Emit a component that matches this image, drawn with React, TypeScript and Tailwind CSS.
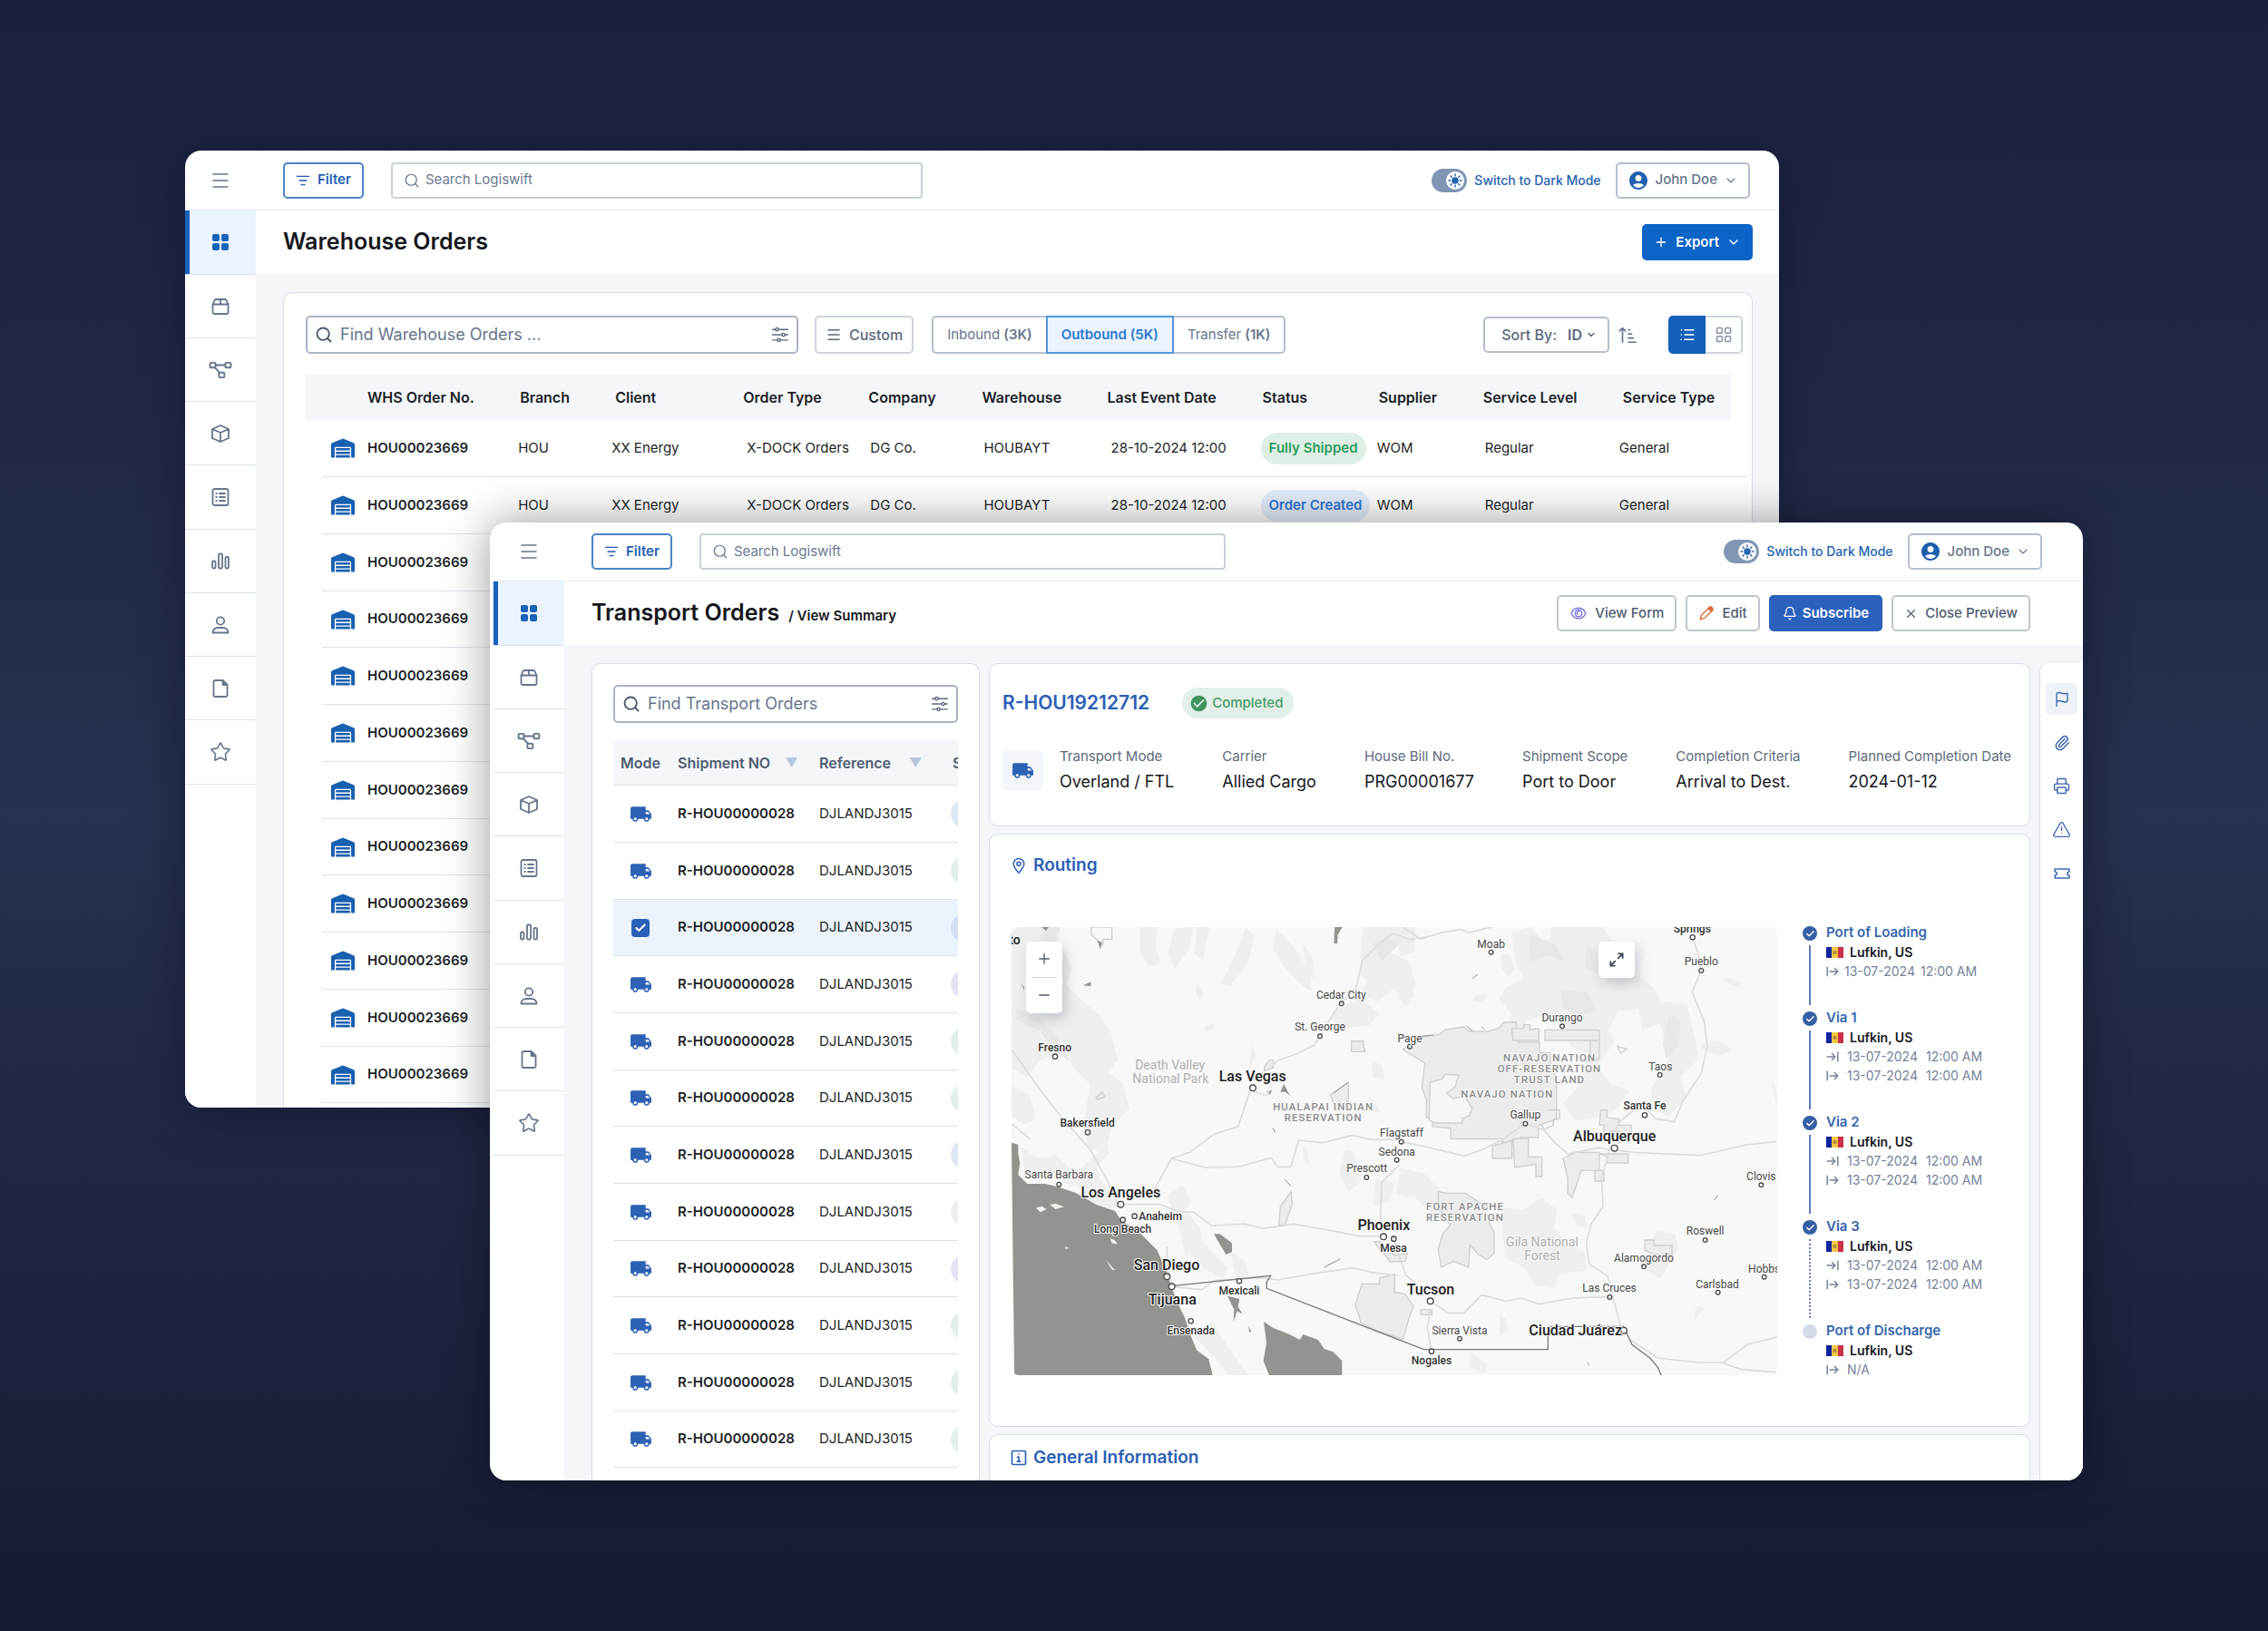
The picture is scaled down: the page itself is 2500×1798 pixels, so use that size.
import type { ReactNode, SVGProps } from "react";
import clsx from "clsx";
import { FaWarehouse } from "react-icons/fa";
import {
  MdAccountCircle,
  MdCheckCircle,
  MdLocalShipping,
} from "react-icons/md";
import {
  Bell,
  Check,
  ChevronDown,
  Flag,
  ListFilter,
  Menu,
  Minus,
  Paperclip,
  Plus,
  Printer,
  Search,
  Star,
  TriangleAlert,
  X,
} from "lucide-react";

type IconProps = SVGProps<SVGSVGElement> & { size?: number };

const Icon = ({ size = 24, children, ...props }: IconProps) => (
  <svg
    width={size}
    height={size}
    viewBox="0 0 24 24"
    fill="none"
    stroke="currentColor"
    strokeWidth={1.8}
    strokeLinecap="round"
    strokeLinejoin="round"
    aria-hidden="true"
    {...props}
  >
    {children}
  </svg>
);

const DashboardIcon = () => (
  <Icon fill="currentColor" stroke="none">
    <rect x="3" y="3" width="8" height="8" rx="2" />
    <rect x="13" y="3" width="8" height="8" rx="2" />
    <rect x="3" y="13" width="8" height="8" rx="2" />
    <rect x="13" y="13" width="8" height="8" rx="2" />
  </Icon>
);

const ParcelIcon = () => (
  <Icon>
    <path d="M3.5 9.5 5.6 4.8A1.5 1.5 0 0 1 7 4h10a1.5 1.5 0 0 1 1.4.8l2.1 4.7V18a2 2 0 0 1-2 2h-13a2 2 0 0 1-2-2zM3.5 9.5h17M12 4v5.5" />
  </Icon>
);

const FlowIcon = () => (
  <Icon size={26}>
    <rect x="1.500" y="4.500" width="5.500" height="5" rx="1" />
    <rect x="17" y="4.500" width="5.500" height="5" rx="1" />
    <rect x="10.500" y="14.500" width="5.500" height="5" rx="1" />
    <path d="M7 7h10M6.500 9.500l4.500 5" />
  </Icon>
);

const BoxIcon = () => (
  <Icon>
    <path d="M12 3 21 7v10l-9 4-9-4V7zM3 7l9 4 9-4M12 11v10" />
  </Icon>
);

const ListBoxIcon = () => (
  <Icon>
    <rect x="3.500" y="3" width="17" height="18" rx="2" />
    <path d="M7.300 8h.6M7.300 12h.6M7.300 16h.6M11 8h6M11 12h6M11 16h6" />
  </Icon>
);

const BarsIcon = () => (
  <Icon>
    <rect x="3" y="11.500" width="3.500" height="8" rx="1.200" />
    <rect x="10" y="3.500" width="4" height="16" rx="1.200" />
    <rect x="17.500" y="7" width="3.500" height="12.500" rx="1.200" />
  </Icon>
);

const UserIcon = () => (
  <Icon>
    <circle cx="12" cy="7.500" r="4.200" />
    <path d="M3.500 20.500c0-3.500 2.600-5.500 6-5.500h5c3.400 0 6 2 6 5.500z" />
  </Icon>
);

const FileIcon = () => (
  <Icon>
    <path d="M6 3h8.500L19.500 8v11.500a1.500 1.500 0 0 1-1.500 1.500H6a1.500 1.500 0 0 1-1.500-1.500v-15A1.500 1.500 0 0 1 6 3z" />
    <path d="M14.500 3v5h5z" fill="currentColor" />
  </Icon>
);

const SlidersIcon = () => (
  <Icon size={20} strokeWidth={1.7}>
    <path d="M2 5h3.500M10 5h12M2 12h12M18.500 12H22M2 19h6M12.500 19H22" />
    <circle cx="7.700" cy="5" r="2" />
    <circle cx="16.300" cy="12" r="2" />
    <circle cx="10.300" cy="19" r="2" />
  </Icon>
);

const SortIcon = () => (
  <Icon size={22}>
    <path d="M6 21V4M2.500 7.500 6 4l3.500 3.500M13 6h2M13 11h4M13 16h6M13 21h9" />
  </Icon>
);

const GridIcon = () => (
  <Icon size={20}>
    <rect x="3" y="3" width="7" height="7" rx="1.500" />
    <rect x="14" y="3" width="7" height="7" rx="1.500" />
    <rect x="3" y="14" width="7" height="7" rx="1.500" />
    <rect x="14" y="14" width="7" height="7" rx="1.500" />
  </Icon>
);

const RowsIcon = () => (
  <Icon size={18} strokeWidth={2.2}>
    <path d="M3 5h.1M3 12h.1M3 19h.1M8 5h13M8 12h13M8 19h13" />
  </Icon>
);

const SunIcon = () => (
  <Icon size={16} strokeWidth={2.2}>
    <circle cx="12" cy="12" r="4.500" fill="currentColor" />
    <path d="M12 1.500v2.500M12 20v2.500M1.500 12H4M20 12h2.500M4.600 4.600l1.700 1.700M17.700 17.700l1.700 1.700M4.600 19.400l1.700-1.700M17.700 6.300l1.700-1.700" />
  </Icon>
);

const EyeIcon = () => (
  <Icon size={20} strokeWidth={1.7} className="text-[#7a78dd]">
    <path d="M2.500 12C4.500 7 8 5 12 5s7.500 2 9.500 7c-2 5-5.500 7-9.500 7s-7.500-2-9.500-7z" />
    <circle cx="12" cy="12" r="4.500" />
    <path d="M13 9.800a2.300 2.300 0 0 0-2.500 3.700" />
  </Icon>
);

const PencilIcon = () => (
  <Icon size={18} className="text-[#df6a35]">
    <path d="M3 21l1.500-6L16 3.500a2.500 2.500 0 0 1 3.500 0l1 1a2.500 2.500 0 0 1 0 3.500L9 19.500z" />
    <path d="M14.500 5 16.500 3h3l1.500 2v2.500L19 9.500z" fill="currentColor" />
  </Icon>
);

const PinIcon = () => (
  <Icon size={20}>
    <path d="M12 22c-4.500-5-7-8.700-7-12a7 7 0 0 1 14 0c0 3.300-2.500 7-7 12z" />
    <circle cx="12" cy="10" r="2.500" />
  </Icon>
);

const InfoBoxIcon = () => (
  <Icon size={20} strokeWidth={2}>
    <rect x="3" y="3" width="18" height="18" rx="1.500" />
    <path d="M12 7v.2M10.500 11H12v6M10 17h4" />
  </Icon>
);

const TicketIcon = () => (
  <Icon size={20}>
    <path d="M2.500 6h19v3.500a2.500 2.500 0 0 0 0 5V18h-19v-3.500a2.500 2.500 0 0 0 0-5z" />
  </Icon>
);

const ExpandIcon = () => (
  <Icon size={20} strokeWidth={2.2}>
    <path d="M14 10l6-6M14.500 4H20v5.500M10 14l-6 6M4 14.500V20h5.500" />
  </Icon>
);

const DepartIcon = () => (
  <Icon size={14} strokeWidth={2.6}>
    <path d="M2 4v16M7 12h15M16 6l6 6-6 6" />
  </Icon>
);

const ArriveIcon = () => (
  <Icon size={14} strokeWidth={2.6}>
    <path d="M22 4v16M2 12h15M11 6l6 6-6 6" />
  </Icon>
);

const FlagMark = () => (
  <svg width="19" height="12" viewBox="0 0 19 12" aria-hidden="true">
    <rect width="7" height="12" fill="#12239e" />
    <rect x="6" width="7" height="12" fill="#f4c944" />
    <rect x="13" width="6" height="12" fill="#c9304a" />
    <circle cx="9.500" cy="6" r="2.300" fill="#b98a3a" />
  </svg>
);

const navItems = [
  { label: "Dashboard", icon: <DashboardIcon /> },
  { label: "Parcels", icon: <ParcelIcon /> },
  { label: "Workflows", icon: <FlowIcon /> },
  { label: "Inventory", icon: <BoxIcon /> },
  { label: "Tasks", icon: <ListBoxIcon /> },
  { label: "Reports", icon: <BarsIcon /> },
  { label: "Users", icon: <UserIcon /> },
  { label: "Documents", icon: <FileIcon /> },
  { label: "Favourites", icon: <Star size={24} strokeWidth={1.6} /> },
];

const Sidebar = () => (
  <nav className="w-[78px] flex-none bg-white" aria-label="Main">
    {navItems.map((item, index) => (
      <a
        key={item.label}
        href="#"
        aria-label={item.label}
        className={clsx(
          "flex h-[70px] items-center justify-center border-b border-[#dbe2ec] nth-[4n+1]:h-[71px]",
          index === 0
            ? "bg-[#ebf4fe] text-[#1a62b9] shadow-[inset_5px_0_0_#1a62bd]"
            : "text-[#66758c]",
        )}
      >
        {item.icon}
      </a>
    ))}
  </nav>
);

const Header = ({ id, className }: { id: string; className: string }) => (
  <header
    className={clsx(
      "flex flex-none items-center border-b border-[#e6eaf0]",
      className,
    )}
  >
    <button
      className="flex w-[78px] flex-none justify-center text-[#66758c]"
      aria-label="Toggle menu"
    >
      <Menu size={24} strokeWidth={1.5} />
    </button>
    <button className="ml-[30px] flex h-10 items-center gap-2 rounded-[5px] border-2 border-[#4a83c8] px-3 text-[15px] font-semibold text-[#1f61b4]">
      <ListFilter size={16} />
      Filter
    </button>
    <label className="ml-[30px] flex h-10 w-[34%] items-center gap-[6px] rounded-[4px] border-2 border-[#c9d0da] px-3 text-[#66758c]">
      <Search size={18} strokeWidth={1.6} />
      <input
        type="search"
        aria-label="Search Logiswift"
        placeholder="Search Logiswift"
        className="min-w-0 flex-1 text-[15px] outline-none placeholder:text-[#6b7a90]"
      />
    </label>
    <label
      htmlFor={id}
      className="ml-auto flex items-center gap-2 text-sm font-medium text-[#2563b0]"
    >
      <input id={id} type="checkbox" role="switch" className="sr-only" />
      <span className="flex h-[26px] w-[39px] items-center justify-end rounded-full bg-[#8296b4] pr-[3px]">
        <span className="flex size-5 items-center justify-center rounded-full bg-white">
          <SunIcon />
        </span>
      </span>
      Switch to Dark Mode
    </label>
    <button className="ml-4 flex h-10 items-center gap-[7px] rounded-[5px] border-2 border-[#b5bfcd] px-[11px] text-[15px] font-medium text-[#66758c]">
      <MdAccountCircle size={24} className="text-[#1f5fae]" />
      John Doe
      <ChevronDown size={16} strokeWidth={1.7} />
    </button>
  </header>
);

type WindowProps = {
  id: string;
  className: string;
  headerClassName: string;
  title: ReactNode;
  actions: ReactNode;
  actionsClassName: string;
  children: ReactNode;
};

const AppWindow = ({
  id,
  className,
  headerClassName,
  title,
  actions,
  actionsClassName,
  children,
}: WindowProps) => (
  <section
    className={clsx(
      "flex min-w-0 flex-col overflow-hidden rounded-[18px] bg-white",
      className,
    )}
  >
    <Header id={id} className={headerClassName} />
    <div className="flex min-h-0 flex-1">
      <Sidebar />
      <div className="flex min-w-0 flex-1 flex-col bg-[#f4f6fa]">
        <div
          className={clsx(
            "flex h-[70px] flex-none items-center justify-between bg-white pl-[30px]",
            actionsClassName,
          )}
        >
          {title}
          <div className="flex gap-[10px]">{actions}</div>
        </div>
        {children}
      </div>
    </div>
  </section>
);

const FindBox = ({
  placeholder,
  className,
}: {
  placeholder: string;
  className: string;
}) => (
  <div
    className={clsx(
      "flex h-[42px] items-center gap-2 rounded-[5px] border-2 border-[#aab5c3] px-2",
      className,
    )}
  >
    <Search size={20} strokeWidth={2.2} className="flex-none text-[#4b586b]" />
    <input
      type="search"
      aria-label={placeholder}
      placeholder={placeholder}
      className="min-w-0 flex-1 text-lg outline-none placeholder:text-[#66758c]"
    />
    <button aria-label="Search options" className="flex-none text-[#5d6b80]">
      <SlidersIcon />
    </button>
  </div>
);

const orderColumns = [
  { label: "WHS Order No.", width: 166, head: "", cell: "font-semibold" },
  { label: "Branch", width: 103, head: "pl-0.5", cell: "" },
  { label: "Client", width: 145, head: "pl-1", cell: "" },
  { label: "Order Type", width: 138, head: "", cell: "pl-1" },
  { label: "Company", width: 125, head: "", cell: "pl-0.5" },
  { label: "Warehouse", width: 138, head: "", cell: "pl-0.5" },
  { label: "Last Event Date", width: 169, head: "", cell: "pl-1" },
  { label: "Status", width: 128, head: "pl-0.5", cell: "" },
  { label: "Supplier", width: 117, head: "pl-0.5", cell: "" },
  { label: "Service Level", width: 150, head: "", cell: "pl-0.5" },
  { label: "Service Type", width: 123, head: "pl-1", cell: "" },
];

const order = [
  "HOU00023669",
  "HOU",
  "XX Energy",
  "X-DOCK Orders",
  "DG Co.",
  "HOUBAYT",
  "28-10-2024 12:00",
  "Fully Shipped",
  "WOM",
  "Regular",
  "General",
];

// only the first two rows have their details loaded
const orders = [
  order,
  order.map((value) => (value === "Fully Shipped" ? "Order Created" : value)),
  ...Array.from({ length: 10 }, () => order.slice(0, 1)),
];

const StatusPill = ({ status }: { status: string }) => (
  <span
    className={clsx(
      "inline-flex h-[35px] items-center rounded-full px-[9px] font-semibold whitespace-nowrap",
      status === "Fully Shipped"
        ? "bg-[#deefe6] text-[#2f9a63]"
        : "bg-[#e3eefb] text-[#2f74d0]",
    )}
  >
    {status}
  </span>
);

const OrdersTable = () => (
  <table className="mt-[23px] w-full table-fixed border-separate border-spacing-0 text-left text-[15px] whitespace-nowrap text-[#1c1f26]">
    <colgroup>
      <col style={{ width: 18 }} />
      <col style={{ width: 50 }} />
      {orderColumns.map((column) => (
        <col key={column.label} style={{ width: column.width }} />
      ))}
      <col style={{ width: 17 }} />
    </colgroup>
    <thead>
      <tr className="h-[50px]">
        <td className="bg-[#f4f6fa]" />
        <td className="bg-[#f4f6fa]" />
        {orderColumns.map((column) => (
          <th
            key={column.label}
            scope="col"
            className={clsx(
              "bg-[#f4f6fa] text-base font-semibold",
              column.head,
            )}
          >
            {column.label}
          </th>
        ))}
        <td />
      </tr>
    </thead>
    <tbody>
      {orders.map((values, row) => (
        <tr key={row} className="h-[63px] nth-[4n]:h-[62px]">
          <td />
          <td className="border-b border-[#dde3eb] pl-[10px]">
            <FaWarehouse size={26} className="text-[#1a60b0]" />
          </td>
          {orderColumns.map((column, index) => (
            <td
              key={column.label}
              className={clsx("border-b border-[#dde3eb]", column.cell)}
            >
              {column.label === "Status" && values[index] ? (
                <StatusPill status={values[index]} />
              ) : (
                values[index]
              )}
            </td>
          ))}
          <td className="border-b border-[#dde3eb]" />
        </tr>
      ))}
    </tbody>
  </table>
);

const tabs = [
  { label: "Inbound", count: "(3K)" },
  { label: "Outbound", count: "(5K)" },
  { label: "Transfer", count: "(1K)" },
];

const WarehouseWindow = () => (
  <AppWindow
    id="dark-mode-warehouse"
    className="col-start-2 col-end-4 row-start-2 row-end-4 shadow-[0_10px_50px_rgba(5,8,25,0.4)]"
    headerClassName="h-[66px] pr-8"
    title={
      <h1 className="text-[25px] font-semibold text-[#15171c]">
        Warehouse Orders
      </h1>
    }
    actionsClassName="pr-[29px]"
    actions={
      <button className="flex h-10 items-center gap-2 rounded-[5px] bg-[#0c64c6] px-[13px] text-[15px] font-semibold text-white">
        <Plus size={16} />
        Export
        <ChevronDown size={16} />
      </button>
    }
  >
    <div className="flex min-h-0 flex-1 pt-5 pr-[29px] pl-[30px]">
      <div className="min-w-0 flex-1 rounded-t-[10px] border border-b-0 border-[#d5dce8] bg-white pt-[25px] pr-[6px] pl-6">
        <div className="mr-1 flex h-[42px] items-center">
          <FindBox
            placeholder="Find Warehouse Orders ..."
            className="w-[543px]"
          />
          <button className="ml-[18px] flex h-full items-center gap-2 rounded-[5px] border-2 border-[#cdd4de] px-[10px] text-base font-medium text-[#5b687b]">
            <Menu size={18} strokeWidth={2} />
            Custom
          </button>
          <div className="ml-5 flex h-full text-[15px] text-[#66758c]">
            {tabs.map((tab, index) => (
              <button
                key={tab.label}
                className={clsx(
                  "border-2 px-[15px]",
                  index === 0 && "rounded-l-[5px] border-r-0 border-[#b5bfcd]",
                  index === 1 &&
                    "border-[#5396dc] bg-[#ebf4fe] font-semibold text-[#2b76cf]",
                  index === 2 && "rounded-r-[5px] border-l-0 border-[#b5bfcd]",
                )}
              >
                {tab.label} <span className="font-semibold">{tab.count}</span>
              </button>
            ))}
          </div>
          <div className="ml-auto flex h-10 items-center rounded-[5px] border-2 border-[#b5bfcd] pr-3 pl-[18px] text-base font-medium text-[#5b687b]">
            <label htmlFor="sort-by">Sort By:</label>
            <select
              id="sort-by"
              className="ml-3 appearance-none font-semibold outline-none"
            >
              <option>ID</option>
            </select>
            <ChevronDown size={12} strokeWidth={3} className="ml-1" />
          </div>
          <button
            aria-label="Sort ascending"
            className="ml-[9px] flex-none text-[#66758c]"
          >
            <SortIcon />
          </button>
          <div className="ml-[34px] flex h-full">
            <button
              aria-label="List view"
              className="flex w-[41px] items-center justify-center rounded-l-[5px] bg-[#1560ba] text-white"
            >
              <RowsIcon />
            </button>
            <button
              aria-label="Grid view"
              className="flex w-[41px] items-center justify-center rounded-r-[5px] border-2 border-l-0 border-[#cdd4de] text-[#8592a5]"
            >
              <GridIcon />
            </button>
          </div>
        </div>
        <OrdersTable />
      </div>
    </div>
  </AppWindow>
);

const shipments = [
  "bg-[#e0e8f6]",
  "bg-[#e2f0e9]",
  "bg-[#d3e0f4]",
  "bg-[#e5e4f3]",
  "bg-[#e2f0e9]",
  "bg-[#e2f0e9]",
  "bg-[#e0e8f6]",
  "bg-[#eeeff2]",
  "bg-[#e5e4f3]",
  "bg-[#e2f0e9]",
  "bg-[#e2f0e9]",
  "bg-[#e2f0e9]",
];

const ShipmentsTable = () => (
  <div className="mt-[19px] overflow-hidden rounded-t-[5px]">
    <table className="w-full table-fixed border-separate border-spacing-0 text-left text-[15px] whitespace-nowrap text-[#1c1f26]">
      <colgroup>
        <col style={{ width: 71 }} />
        <col style={{ width: 156 }} />
        <col style={{ width: 145 }} />
        <col />
      </colgroup>
      <thead>
        <tr className="h-[50px] text-base text-[#4f5c70] [&>th]:border-b [&>th]:border-[#dde3eb] [&>th]:bg-[#f4f6fa] [&>th]:font-semibold">
          <th scope="col" className="pl-2">
            Mode
          </th>
          <th scope="col">
            <span className="flex items-center gap-4">
              Shipment NO
              <span className="text-sm text-[#b9c6da]">▼</span>
            </span>
          </th>
          <th scope="col">
            <span className="flex items-center gap-5">
              Reference
              <span className="text-sm text-[#b9c6da]">▼</span>
            </span>
          </th>
          <th scope="col" className="pl-0.5">
            Status
          </th>
        </tr>
      </thead>
      <tbody>
        {shipments.map((pill, index) => (
          <tr
            key={index}
            className={clsx(
              "h-[63px] nth-[3n]:h-[62px] [&>td]:border-b [&>td]:border-[#dde3eb]",
              index === 2 && "bg-[#ebf3fd]",
            )}
          >
            <td className="pl-[18px]">
              {index === 2 ? (
                <span className="grid w-6 place-items-center">
                  <input
                    type="checkbox"
                    defaultChecked
                    aria-label="Select R-HOU00000028"
                    className="col-start-1 row-start-1 size-5 appearance-none rounded-[4px] bg-[#2a60b8]"
                  />
                  <Check
                    size={14}
                    strokeWidth={3.5}
                    className="pointer-events-none col-start-1 row-start-1 text-white"
                  />
                </span>
              ) : (
                <MdLocalShipping size={25} className="text-[#2d61b5]" />
              )}
            </td>
            <td className="font-semibold">R-HOU00000028</td>
            <td>DJLANDJ3015</td>
            <td className="overflow-hidden">
              <span className={clsx("block h-8 w-24 rounded-full", pill)} />
            </td>
          </tr>
        ))}
      </tbody>
    </table>
  </div>
);

const details = [
  { label: "Transport Mode", value: "Overland / FTL" },
  { label: "Carrier", value: "Allied Cargo" },
  { label: "House Bill No.", value: "PRG00001677" },
  { label: "Shipment Scope", value: "Port to Door" },
  { label: "Completion Criteria", value: "Arrival to Dest." },
  { label: "Planned Completion Date", value: "2024-01-12" },
];

const SummaryCard = () => (
  <article className="flex-none rounded-[10px] border border-[#d5dce8] bg-white pt-[26px] pb-[36px] pl-[14px]">
    <div className="flex h-[34px] items-center gap-9">
      <h2 className="text-[21px] font-semibold text-[#2b60b5]">
        R-HOU19212712
      </h2>
      <span className="flex h-full items-center gap-1 rounded-full bg-[#e1f0e8] pr-3 pl-2 text-[15px] font-medium text-[#4b9a6c]">
        <MdCheckCircle size={21} className="text-[#3f935f]" />
        Completed
      </span>
    </div>
    <div className="mt-8 flex items-center">
      <span className="flex size-[45px] flex-none items-center justify-center rounded-[6px] bg-[#f3f6fa] text-[#2d61b5]">
        <MdLocalShipping size={25} />
      </span>
      <dl className="ml-[18px] flex gap-[53px] whitespace-nowrap">
        {details.map((detail) => (
          <div key={detail.label} className="flex flex-col gap-[6px]">
            <dt className="text-[15px] leading-5 text-[#5d6a7d]">
              {detail.label}
            </dt>
            <dd className="text-lg leading-6 text-[#15171c]">{detail.value}</dd>
          </div>
        ))}
      </dl>
    </div>
  </article>
);

type Place = {
  name: string;
  x: number;
  y: number;
  dot?: [number, number];
  anchor?: "start" | "end";
};

const cities: Place[] = [
  { name: "Los Angeles", x: 407, y: 930, dot: [407, 952] },
  { name: "San Diego", x: 559, y: 1168, dot: [560, 1191] },
  { name: "Tijuana", x: 578, y: 1282, dot: [576, 1224] },
  { name: "Las Vegas", x: 843, y: 545, dot: [844, 567] },
  { name: "Phoenix", x: 1277, y: 1037, dot: [1276, 1059] },
  { name: "Tucson", x: 1432, y: 1249, dot: [1431, 1272] },
  { name: "Albuquerque", x: 2040, y: 743, dot: [2040, 766] },
  { name: "Ciudad Juárez", x: 1911, y: 1386, dot: [2071, 1369] },
];

const towns: Place[] = [
  { name: "Fresno", x: 189, y: 445, dot: [190, 463] },
  { name: "Bakersfield", x: 297, y: 696, dot: [298, 714] },
  { name: "Anaheim", x: 467, y: 1004, dot: [453, 991], anchor: "start" },
  { name: "Long Beach", x: 414, y: 1047, dot: [414, 1003] },
  { name: "Mexicali", x: 799, y: 1250, dot: [799, 1206] },
  { name: "Ensenada", x: 639, y: 1382, dot: [639, 1338] },
  { name: "Mesa", x: 1309, y: 1110, dot: [1310, 1066] },
  { name: "Nogales", x: 1435, y: 1482, dot: [1435, 1438] },
  { name: "Santa Fe", x: 2140, y: 638, dot: [2140, 657] },
  { name: "Springs", x: 2297, y: 52, dot: [2298, 69] },
];

const villages: Place[] = [
  { name: "Santa Barbara", x: 203, y: 867, dot: [203, 886] },
  { name: "St. George", x: 1066, y: 378, dot: [1066, 396] },
  { name: "Cedar City", x: 1136, y: 273, dot: [1137, 288] },
  { name: "Page", x: 1363, y: 415, dot: [1363, 430] },
  { name: "Flagstaff", x: 1336, y: 727, dot: [1335, 745] },
  { name: "Sedona", x: 1320, y: 790, dot: [1320, 805] },
  { name: "Prescott", x: 1221, y: 845, dot: [1220, 863] },
  { name: "Sierra Vista", x: 1528, y: 1381, dot: [1528, 1396] },
  { name: "Las Cruces", x: 2023, y: 1240, dot: [2024, 1259] },
  { name: "Alamogordo", x: 2137, y: 1143, dot: [2137, 1158] },
  { name: "Carlsbad", x: 2380, y: 1228, dot: [2382, 1243] },
  { name: "Hobbs", x: 2535, y: 1177, dot: [2535, 1192] },
  { name: "Roswell", x: 2340, y: 1051, dot: [2340, 1070] },
  { name: "Clovis", x: 2525, y: 873, dot: [2525, 888] },
  { name: "Taos", x: 2192, y: 509, dot: [2190, 524] },
  { name: "Pueblo", x: 2327, y: 160, dot: [2327, 179] },
  { name: "Durango", x: 1867, y: 348, dot: [1867, 363] },
  { name: "Moab", x: 1632, y: 103, dot: [1632, 118] },
  { name: "Gallup", x: 1745, y: 669, dot: [1745, 685] },
];

const parks: Place[] = [
  { name: "Death Valley", x: 570, y: 506 },
  { name: "National Park", x: 572, y: 552 },
  { name: "Gila National", x: 1801, y: 1091 },
  { name: "Forest", x: 1801, y: 1137 },
];

const reservations: Place[] = [
  { name: "HUALAPAI INDIAN", x: 1077, y: 640 },
  { name: "RESERVATION", x: 1077, y: 676 },
  { name: "NAVAJO NATION", x: 1825, y: 478 },
  { name: "OFF-RESERVATION", x: 1825, y: 514 },
  { name: "TRUST LAND", x: 1825, y: 550 },
  { name: "NAVAJO NATION", x: 1685, y: 598 },
  { name: "FORT APACHE", x: 1546, y: 970 },
  { name: "RESERVATION", x: 1546, y: 1006 },
];

const Places = ({
  places,
  radius = 0,
  className,
}: {
  places: Place[];
  radius?: number;
  className: string;
}) => (
  <g className={className}>
    {places.map(({ name, x, y, dot, anchor = "middle" }) => (
      <g key={`${name}-${x}-${y}`}>
        {dot && (
          <circle
            cx={dot[0]}
            cy={dot[1]}
            r={radius}
            fill="#fff"
            stroke="#4a4a4a"
            strokeWidth={4}
          />
        )}
        <text
          x={x}
          y={y}
          textAnchor={anchor}
          stroke="#f8f8f8"
          strokeWidth={6}
          strokeLinejoin="round"
          paintOrder="stroke"
        >
          {name}
        </text>
      </g>
    ))}
  </g>
);

const RouteMap = () => (
  <svg
    viewBox="46 35 2532 1482"
    className="block w-full rounded-[8px] font-['Roboto',sans-serif]"
    role="img"
    aria-label="Route map"
  >
    <rect x="46" y="35" width="2532" height="1482" fill="#f8f8f8" />
    {/* mountains and forests */}
    <g fill="#efefef">
      <path d="M46 35h150l10 60 40 70-20 60 60 60 50 40 40 60 20 90-30 40 50 40 20 80-60 60-20 90-60-20-10-90 20-120-60-60-40-90-60-40-50-30-40-60-30-20z" />
      <path d="M46 250l60 60 40 90 60 60-60 10-50 60-50-30z" />
      <path d="M46 560l60 30 20 80-40 20-40-30zM75 760l60 40 60-10 50 50 80-20 20 60-100 10-60-30-90 10zM250 860l60-60 50-40 10 20-50 60 40 60 40 60-60 10-60-40z" />
      <path d="M470 35h60l-10 60 20 60-40 10-30-50zM585 40l60-5-10 70-50 70-20-60zM660 35h40l-20 110-30-20zM820 40l30 20-20 90-60 80-30-10 40-80zM920 40l60 60 50 80 10 70-30-20-60-60-40-60zM1010 90l30 40 10 80-30-20zM660 215l20 40-10 25-15-30zM690 360l30-5-10 20-30 5zM840 420l15 40-25 50z" />
      <path d="M1210 35h170v30l-40 10-50 50-60 90-30-20v-80zM1240 180l60-60 60 30 20 60-60 20-60 50-60-20zM1130 300l70-30 60 50-30 40-90 10-40-30zM1290 200l60 0 30 60-30 40z" />
      <path d="M1320 35h60v80l-50 20zM1665 120l30 10 15 40-20 30-25-30zM1335 210l30-15 20 30-30 40-35 10zM1575 260l50-5-20 25-30 0z" />
      <path d="M1700 50l60-15 60 60 10-60h170l40 60 60 40 10 60 60 40 40 80 60 30 10 60-50 10-40-60-60 20-10-70-70 10-30 60 20 40-60 80 50 60 60 20-40 60-50 30-90 10-40-60 60-60 20-100-60-30-20-80-60-20-60 20-10 60-60-20 20-60-40-50 20-40 60-30-30-60z" />
      <path d="M2200 280l80 10 20 90 20 90-60 60 20 70-60 60-50-20-10-70 60-100-20-90zM2330 420l50-10 50 30-40 20-60-20zM2400 200l60 15-10 20-50-20zM2560 540l20 50v60z" />
      <path d="M1330 830l80 20 60 60 20 100-50-20-60-60-60-10zM1250 870l60 10-10 60-60 20zM1150 770l30 10 20 100-40 30-30-60z" />
      <path d="M1660 960l80 10 60-40 50 40-10 60 40 50 60 30 10 60-90 10-20 50-60-10-40-60-60-30-10-80zM1900 980l40 10 10 40-40-10zM2180 1040l60 10 10 50-60 100-40-30 10-90z" />
      <path d="M560 920l50-30 30 50-20 30 50 60 10 80-60 10-20-90zM640 1040l60 60 60 60-10 40-60-30-60-60zM640 1380l70-40 50 80 70 100h-60l-50-60zM770 1110l50 30 10 50-40 10z" />
      <path d="M1240 480l30 10 10 50-40-10zM1660 1320l20 10 10 40-30 20zM2310 1290l30 5-30 30-10 20zM1560 1440l60 40-10 30-50-20zM1230 590l40 60-40-10zM1010 760l15 10 5 50-20-20z" />
    </g>
    <g fill="#e8e8e8">
      <path d="M60 300l80 40 60 60 40 80-60-40-40-60-80-40zM150 35h60l-20 50-50-10zM1760 60l80 30 40 60-60-20-60 20zM1950 100l60 40-10 60-60-30zM1860 240l90 10 30 60-60 20-50-30zM1240 90l50-20 40 20-60 60zM2220 330l40 10-10 90-40 40-10-50z" />
    </g>
    {/* reservations */}
    <g fill="#ececec" stroke="#cfcfcf" strokeWidth={4}>
      <path d="M1340 440l60-40 60-10 20-15 60-10 20 15 60 0 35-10 20-20 40 0 7 66h70v35h36v50l20 30v140l-60 20v40h-60v15h-60v-10h-170V700l-60-5v-30h-20v-60l-15-40 10-80z" />
      <path d="M1430 548l40-10 10-16 45 2-12 40-28 20 20 18 40-8 24 40-8 24-24 10v15h-90l-20-10z" fill="#f6f6f6" />
      <path d="M1700 370h40v-12h20v16l30-4v40h-85zM1810 375h180v35h-180zM1960 410h30v60l-30 10z" />
      <path d="M1636 760l65-20v60h-65zM1705 735h50v60h45v65h-20v-40l-70 10zM1870 800l40-20h80v60h-60l-30 90-15-15v-50zM1990 785h95v30h-70v-20zM1975 840h30v35h-30zM1995 640h20v25l40 5v20h40v30l-40 30v-40h-30v30h-20v-50h-15z" />
      <path d="M1457 910l30 5 60 0 60 40 20 60 15 30v70l-25 20-30-20-25-30-5 75-50-20-40 20-10-60 15-50 25-30-40-60z" />
      <path d="M1205 1215h58v-20l50-12v60l34 5 28 40-16 45-18 65-80-25-60-30-18-60z" />
      <path d="M1245 1075h20v20l50 25 40-5-6 25-50 2z" />
      <path d="M1170 412h40v15l6 20h-46zM883 495l15-20h14v25l-30 10zM930 1020l5-60 35-50 5 40-25 70zM1100 590l60-40v60l-40 30zM325 600l20-20 10 15-20 10zM2140 1070h30v18h60v30h-60l-30-15zM1400 1300h36v17h-36z" />
      <path d="M310 60v-25h68v40h-30v20z" fill="none" />
      <path d="M1820 640h38v30h-20v20l-30 14-14-20M2050 430l30 8-20 14z" fill="none" />
    </g>
    {/* sea and lakes */}
    <g fill="#93938f">
      <path d="M46 748l22 6v30l6 30-6 40 30 30h60l40 10 60 20 70 40 60 20 20 30 60 40 60 60 30 70 20 60 20 50 20 40 20 60 20 50 40 30 10 40 10 50h-662z" />
      <path d="M880 1340l30 20 50 20 40 20 10-18 50 18 20 30 30 10 29 30v50h-240l-20-50 10-60z" />
      <path d="M715 1050l20 0 40 30v30l-20 8zM760 1255l40 10-5 25 15 25-18-10-12 35 2-40zM145 35h25l-10 12zM330 80l15 5-5 25zM1115 35h25l-15 25-2 30h-10v-30zM283 228l25-12v15zM78 220l10 15v10zM890 578l18-4-8 16zM935 580l12-26 20 40-15-14z" />
      <path d="M830 1355l10 20-8-2zM1950 1470l8 18-6-8zM1600 365l12 12-8-12z" />
    </g>
    <g fill="#f0f0ec">
      <path d="M126 964l20-6 16 10-20 10zM172 952l20-2 28 10-28 8zM372 1065l15 5 10 14-20-4zM358 1135l30 35-10-2zM222 1092l14 4-10 4z" />
    </g>
    {/* roads */}
    <g fill="none" stroke="#dcdcdc" strokeWidth={5} strokeLinejoin="round">
      <path d="M46 440l100 140 70 90 90 100 60 110 30 70M46 685l60 50M407 952h130l60 25 50 0 60 45 110-5 60 15 100-15 90 15 130 25h80" />
      <path d="M520 900l55-100 60-20 80-60 80-25 40-120 55 18 10-20M575 800l110 30 110-2 110-30 20 30h45l25-88 80 8 100-25 60 15h100M1066 396l-20 30-60 30-60 20-20 20" />
      <path d="M1066 396l60-100 60-60 20-90 60-60 40-30 60 20 60-10M1340 35l60 40 60-20 70-12 30 10 80-20M1335 745l60 12 150 35 60-22 60-30 80-55 60 20 40 45 40 35 100-20 120 15 220 10 150-35 100-10" />
      <path d="M2298 69l20 60 9 50-30 70 40 100 10 80-20 90-60 90-30 70-60-10-40-40-20 0-60 50-30 60-10 60-20 60 5 100-40 60-15 60 10 70 60 40 20 80 30 110" />
      <path d="M1431 1272l60 40h50l60-60 80 20 50-10 60 20 110-20 120-5M1431 1300l-10 60 14 78M1310 1066l40 120 70 60M1330 820l-60 60-5 160M560 1090v80l20 50M576 1224l100 10 40-30 150-10 60 8 110-20 140-20 60 15 90 10M2180 1460l140 15h80l80-60 100-25M2400 1478l60 20 120 10M2071 1369l20 30 90 60" />
    </g>
    {/* borders */}
    <g fill="none" stroke="#7b7b7b" strokeWidth={4}>
      <path d="M576 1222l327-34-13 20v22l520 202h410v-76h250l28 60 60 45 25 30 20 45" />
    </g>
    <g fill="none" stroke="#8b8b8b" strokeWidth={3}>
      <path d="M1110 585l50-38M910 700l8 14M950 870l20 22M1400 396l40-4M1550 362l20 16M1080 1160l54-28M2370 938l12-16M1570 205l18-14" />
    </g>
    <Places places={parks} className="fill-[#b0b0b0] text-[42px]" />
    <Places
      places={reservations}
      className="fill-[#8c8c8c] text-[34px] font-medium tracking-widest"
    />
    <Places
      places={villages}
      radius={7}
      className="fill-[#4a4a4a] text-[36px]"
    />
    <Places
      places={towns}
      radius={8}
      className="fill-[#333333] text-[36px] font-medium"
    />
    <Places
      places={cities}
      radius={10}
      className="fill-[#222222] text-[48px] font-medium"
    />
    <text
      x="75"
      y="93"
      textAnchor="end"
      className="fill-[#222222] text-[42px] font-medium"
    >
      to
    </text>
  </svg>
);

type Stop = {
  title: string;
  times: { kind: "arrive" | "depart"; value: ReactNode }[];
  state: "done" | "last" | "pending";
};

const time = (
  <>
    <span>13-07-2024</span>
    <span>12:00 AM</span>
  </>
);

const stops: Stop[] = [
  {
    title: "Port of Loading",
    times: [{ kind: "depart", value: time }],
    state: "done",
  },
  ...["Via 1", "Via 2", "Via 3"].map(
    (title): Stop => ({
      title,
      times: [
        { kind: "arrive", value: time },
        { kind: "depart", value: time },
      ],
      state: title === "Via 3" ? "last" : "done",
    }),
  ),
  {
    title: "Port of Discharge",
    times: [{ kind: "depart", value: <span>N/A</span> }],
    state: "pending",
  },
];

const Timeline = () => (
  <ol className="w-[250px] flex-none">
    {stops.map((stop, index) => (
      <li key={stop.title} className="flex gap-[10px]">
        <div className="flex w-4 flex-none flex-col items-center pt-1">
          {stop.state === "pending" ? (
            <span className="size-4 rounded-full bg-[#d3dbe8]" />
          ) : (
            <>
              <span className="flex size-4 items-center justify-center rounded-full bg-[#365fa5] text-white">
                <Check size={11} strokeWidth={3} />
              </span>
              <span
                className={clsx(
                  "mt-[5px] mb-[3px] flex-1 border-l-2",
                  stop.state === "last"
                    ? "border-dotted border-[#6b83ab]"
                    : "border-[#5f7fb5]",
                )}
              />
            </>
          )}
        </div>
        <div className={clsx(stop.state !== "pending" && "pb-[30px]")}>
          <h4 className="text-[15px] leading-[22px] font-semibold text-[#3566ad]">
            {stop.title}
          </h4>
          <p className="flex h-[21px] items-center gap-[7px] text-sm font-semibold text-[#15171c]">
            <FlagMark />
            Lufkin, US
          </p>
          {stop.times.map(({ kind, value }) => (
            <p
              key={kind}
              className={clsx(
                "flex h-[21px] items-center text-sm text-[#75839a]",
                index === 0 ? "gap-[6px]" : "gap-[9px]",
              )}
            >
              {kind === "arrive" ? <ArriveIcon /> : <DepartIcon />}
              {value}
            </p>
          ))}
        </div>
      </li>
    ))}
  </ol>
);

const RoutingCard = () => (
  <article className="flex-none rounded-[10px] border border-[#d5dce8] bg-white pt-5 pb-[52px] pl-6">
    <h3 className="-ml-0.5 flex items-center gap-[6px] text-[19px] leading-7 font-semibold text-[#2b60b5]">
      <PinIcon />
      Routing
    </h3>
    <div className="mt-[49px] flex items-center gap-7">
      <div className="relative min-w-0 flex-1">
        <RouteMap />
        <div className="absolute top-4 left-4 flex w-10 flex-col rounded-[5px] bg-white text-[#4f5b6e] shadow-[4px_6px_14px_rgba(60,75,105,0.25)]">
          <button
            aria-label="Zoom in"
            className="flex h-[39px] items-center justify-center"
          >
            <Plus size={18} strokeWidth={1.8} />
          </button>
          <hr className="mx-[6px] border-[#d0d9e8]" />
          <button
            aria-label="Zoom out"
            className="flex h-[39px] items-center justify-center"
          >
            <Minus size={18} strokeWidth={1.8} />
          </button>
        </div>
        <button
          aria-label="Full screen"
          className="absolute top-4 right-[157px] flex size-10 items-center justify-center rounded-[5px] bg-white text-[#3d4858] shadow-[4px_6px_14px_rgba(60,75,105,0.25)]"
        >
          <ExpandIcon />
        </button>
      </div>
      <Timeline />
    </div>
  </article>
);

const railItems = [
  { label: "Flag", icon: <Flag size={18} strokeWidth={1.8} /> },
  { label: "Attachments", icon: <Paperclip size={18} /> },
  { label: "Print", icon: <Printer size={19} strokeWidth={1.8} /> },
  { label: "Alerts", icon: <TriangleAlert size={21} strokeWidth={1.6} /> },
  { label: "Ticket", icon: <TicketIcon /> },
];

const Rail = () => (
  <aside className="flex w-12 flex-none flex-col items-center gap-[13px] rounded-tl-[10px] border-l border-[#d5dce8] bg-white pt-[22px] text-[#3e69ae]">
    {railItems.map((item, index) => (
      <button
        key={item.label}
        aria-label={item.label}
        className={clsx(
          "flex size-[35px] flex-none items-center justify-center rounded-[5px]",
          index === 0 && "bg-[#eff2f7]",
        )}
      >
        {item.icon}
      </button>
    ))}
  </aside>
);

const ActionButton = ({
  icon,
  children,
}: {
  icon: ReactNode;
  children: ReactNode;
}) => (
  <button className="flex h-10 items-center gap-2 rounded-[5px] border-2 border-[#c0c6cf] px-3 text-[15px] font-medium text-[#505c6f]">
    {icon}
    {children}
  </button>
);

const TransportWindow = () => (
  <AppWindow
    id="dark-mode-transport"
    className="col-start-3 col-end-5 row-start-3 row-end-5 border-l-4 border-white shadow-[0_0_50px_rgba(0,0,0,0.4)]"
    headerClassName="h-[65px] pr-[45px]"
    title={
      <h1 className="flex items-baseline gap-[10px] text-[25px] font-semibold text-[#15171c]">
        Transport Orders
        <span className="text-[15px]">/ View Summary</span>
      </h1>
    }
    actionsClassName="pr-[58px]"
    actions={
      <>
        <ActionButton icon={<EyeIcon />}>View Form</ActionButton>
        <ActionButton icon={<PencilIcon />}>Edit</ActionButton>
        <button className="flex h-10 items-center gap-[6px] rounded-[5px] bg-[#2b61bc] px-[15px] text-[15px] font-semibold text-white">
          <Bell size={16} />
          Subscribe
        </button>
        <ActionButton icon={<X size={15} />}>Close Preview</ActionButton>
      </>
    }
  >
    <div className="flex min-h-0 flex-1 gap-[10px] pt-5 pl-[30px]">
      <div className="w-[428px] flex-none rounded-t-[10px] border border-b-0 border-[#d5dce8] bg-white px-[23px] pt-[23px]">
        <FindBox placeholder="Find Transport Orders" className="w-full" />
        <ShipmentsTable />
      </div>
      <div className="flex min-w-0 flex-1 flex-col gap-2">
        <SummaryCard />
        <RoutingCard />
        <article className="flex-none rounded-t-[10px] border border-b-0 border-[#d5dce8] bg-white px-6 pt-[11px] pb-10">
          <h3 className="-ml-0.5 flex items-center gap-[6px] text-[19px] leading-7 font-semibold text-[#2b60b5]">
            <InfoBoxIcon />
            General Information
          </h3>
        </article>
      </div>
      <Rail />
    </div>
  </AppWindow>
);

const App = () => (
  <main className="grid h-screen grid-cols-[204fr_336fr_1421fr_335fr_204fr] grid-rows-[166fr_410fr_645fr_411fr_166fr] overflow-hidden bg-linear-to-b from-[#1a203c] via-[#273050] to-[#161a33] font-['Inter',sans-serif]">
    <WarehouseWindow />
    <TransportWindow />
  </main>
);

export default App;
